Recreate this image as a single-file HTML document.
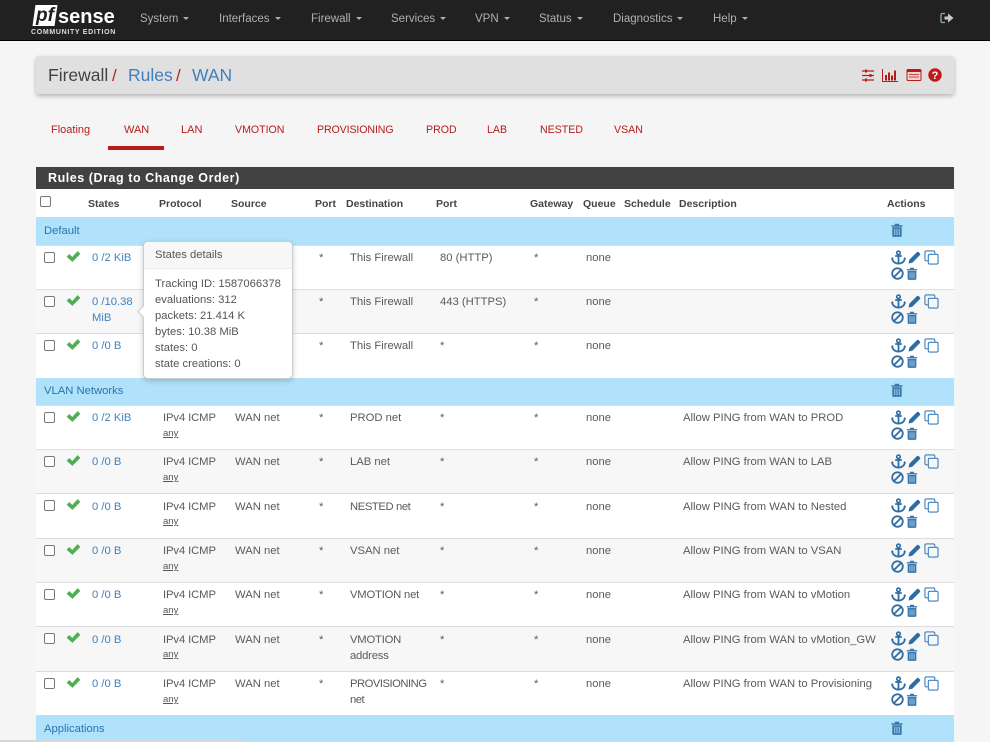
<!DOCTYPE html>
<html><head><meta charset="utf-8"><style>
html,body{margin:0;padding:0;width:990px;height:742px;overflow:hidden;background:#f5f5f5;font-family:"Liberation Sans",sans-serif;font-size:11.25px;color:#5a5a5a}
div,span,a,svg{position:absolute;white-space:nowrap}
.nav{left:0;top:0;width:990px;height:40px;background:#212121;border-bottom:1px solid #000}
.nav span{top:12px;color:#b0b0b0;font-size:11.5px;line-height:14px}
.nav span:after{content:"";display:inline-block;margin-left:5px;vertical-align:2px;border-top:3px solid #b0b0b0;border-left:3px solid transparent;border-right:3px solid transparent}
.nav span.n:after{display:none}
.crumb{left:36px;top:56px;width:918px;height:38px;background:#e0e0e0;border-radius:3px;box-shadow:0 2px 5px rgba(0,0,0,.28)}
.crumb span{top:9px;font-size:17.5px;line-height:21px;color:#424242}
.crumb .l{color:#3f7fbf}.crumb .s{color:#b71c1c;font-size:17px}
.tab{top:123px;color:#b71c1c;font-size:10.6px;line-height:14px}
.r{left:36px;width:918px;background:#fff;border-top:1px solid #ddd}
.g{background:#f7f7f7}
.b{left:36px;width:918px;background:#b0e3fb;color:#2874b0}
.b span{left:8px;top:6px;line-height:14px}
.h{top:8px;font-weight:bold;color:#444;font-size:10.5px;line-height:14px}
.r span{top:4px;line-height:16px}
.r.t5 span{top:5px}
.cb{left:8px;top:6px;width:9px;height:9px;border:1px solid #777;border-radius:2px;background:#fff}
.ck{left:30px;top:4px}
.ac{left:855px;top:4px}
.st{left:56px;color:#3f7fbf}
.a{left:127px;letter-spacing:-.1px}.c{left:199px}.d{left:283px}.e{left:314px;white-space:normal;width:85px}.f{left:404px}.j{left:498px}.k{left:550px}.m{left:647px}
.r span.any{left:127px;top:22px;font-size:9.5px;line-height:12px;text-decoration:underline;color:#555}
.pop{left:143px;top:241px;width:150px;height:138px;background:#fff;border:1px solid #ccc;border-radius:5px;box-shadow:0 2px 6px rgba(0,0,0,.2);box-sizing:border-box}
.pop .hd{left:0;top:0;width:148px;height:26px;background:#f7f7f7;border-bottom:1px solid #ebebeb;border-radius:5px 5px 0 0}
.pop span{left:11px;line-height:16px;color:#555}
</style></head><body>
<svg width="0" height="0" style="left:0;top:0"><defs>
<symbol id="chk" viewBox="0 0 14 12"><path d="M.6 6.200l2.500-2.500 2.800 2.800L10.800 1l2.600 2.600L6 11z" fill="#4caf50"/></symbol>
<symbol id="anc" viewBox="0 0 16 16"><circle cx="8" cy="3" r="1.900" fill="none" stroke="#2d6ca5" stroke-width="1.700"/><path d="M4.500 6.400h7M8 5v9.500M1.300 8.500C1.300 12.200 4.500 14.500 8 14.500s6.700-2.300 6.700-6" fill="none" stroke="#2d6ca5" stroke-width="1.900"/><path d="M0 9.500l1.300-2 1.500 2zM13.200 9.500l1.500-2 1.300 2z" fill="#2d6ca5"/></symbol>
<symbol id="pen" viewBox="0 0 14 14"><path d="M.6 13.400l.8-4L9.600 1.200c.5-.5 1.300-.5 1.800 0l1.400 1.400c.5.5.5 1.300 0 1.800L4.600 12.600z" fill="#2d6ca5"/></symbol>
<symbol id="cpy" viewBox="0 0 16 16"><path d="M4 11.500H2.500A1.500 1.500 0 0 1 1 10V2.500A1.500 1.500 0 0 1 2.500 1H10a1.500 1.500 0 0 1 1.500 1.500V4" fill="none" stroke="#3f7fbf" stroke-width="1.200"/><rect x="4.600" y="4.600" width="10.400" height="10.400" rx="1.500" fill="none" stroke="#3f7fbf" stroke-width="1.200"/></symbol>
<symbol id="ban" viewBox="0 0 14 14"><circle cx="7" cy="7" r="5.700" fill="none" stroke="#2d6ca5" stroke-width="1.900"/><path d="M3.100 10.900l7.800-7.800" stroke="#2d6ca5" stroke-width="1.900"/></symbol>
<symbol id="tr" viewBox="0 0 12 14"><path d="M.5 2.300h11V3.800H.5zM3.800 2.500V.8h4.400v1.700zM1.300 4.300h9.400v8.300c0 .8-.5 1.300-1.200 1.300h-7c-.7 0-1.200-.5-1.200-1.300z" fill="#3a77ad"/><path d="M3.800 5.800v6.500M6 5.800v6.500M8.200 5.800v6.500" stroke="#b0d4ee" stroke-width=".9"/></symbol>
<symbol id="act" viewBox="0 0 54 36"><use href="#anc" x="0" y="0" width="15" height="15"/><use href="#pen" x="17" y="1" width="13" height="13"/><use href="#cpy" x="33" y="0" width="15" height="15"/><use href="#ban" x="0" y="17" width="13" height="13"/><use href="#tr" x="15" y="17" width="12" height="13"/></symbol>
</defs></svg>

<div class="nav">
<div style="left:34px;top:5px;width:22px;height:21px;background:#fff;transform:skewX(-8deg)"></div>
<span class="n" style="left:36px;top:6px;color:#212121;font:italic bold 19px/19px 'Liberation Sans',sans-serif">pf</span>
<div style="left:58px;top:6px;color:#fff;font:bold 20px/23px 'Liberation Sans',sans-serif">sense</div>
<div style="left:31px;top:28px;color:#ddd;font:bold 7px/9px 'Liberation Sans',sans-serif;letter-spacing:.68px">COMMUNITY EDITION</div>
<span style="left:140px">System</span><span style="left:219px">Interfaces</span><span style="left:311px">Firewall</span><span style="left:391px">Services</span><span style="left:475px">VPN</span><span style="left:539px">Status</span><span style="left:613px">Diagnostics</span><span style="left:713px">Help</span>
<svg style="left:940px;top:12px" width="14" height="12" viewBox="0 0 14 12"><path d="M5 1.500H2.200C1.500 1.500 1 2 1 2.700v6.600c0 .7.500 1.200 1.200 1.200H5" fill="none" stroke="#8fa9bd" stroke-width="1.300"/><path d="M4.500 4.500H8V1.500L13.500 6 8 10.500v-3H4.500z" fill="#c8c8c8"/></svg>
</div>

<div class="crumb">
<span style="left:12px">Firewall</span><span class="s" style="left:76px">/</span><span class="l" style="left:92px">Rules</span><span class="s" style="left:140px">/</span><span class="l" style="left:156px">WAN</span>
<svg style="left:825px;top:12px" width="90" height="15" viewBox="0 0 90 15">
<path d="M1 3h12M1 7.500h12M1 12h12" stroke="#b71c1c" stroke-width="1.200"/><path d="M4 1.500h2v3H4zM8.500 6h2v3h-2zM4 10.500h2v3H4z" fill="#b71c1c"/>
<path d="M21.500 1v12.500H37" fill="none" stroke="#b71c1c" stroke-width="1"/><path d="M24 7h2v5.500h-2zM27 4.500h2v8h-2zM30 7.500h2v5h-2zM33 2.500h2v10h-2z" fill="#b71c1c"/>
<rect x="46" y="1.500" width="14" height="11" rx="1" fill="#f0d0d0" stroke="#b71c1c" stroke-width="1"/><path d="M46 1.500h14v2.500H46z" fill="#b71c1c"/><path d="M48 6.500h10M48 9h10" stroke="#b71c1c" stroke-width=".8"/>
<circle cx="74" cy="7" r="6.700" fill="#c01818"/><text x="74" y="11" text-anchor="middle" fill="#fff" font-size="11" font-weight="bold" font-family="Liberation Sans">?</text></svg>
</div>

<span class="tab" style="left:51px;font-size:11px">Floating</span><span class="tab" style="left:124px;font-size:11px">WAN</span><span class="tab" style="left:181px;font-size:11px">LAN</span><span class="tab" style="left:235px">VMOTION</span><span class="tab" style="left:317px;letter-spacing:-.1px">PROVISIONING</span><span class="tab" style="left:426px">PROD</span><span class="tab" style="left:487px">LAB</span><span class="tab" style="left:540px">NESTED</span><span class="tab" style="left:614px">VSAN</span>
<div style="left:108px;top:146px;width:56px;height:4px;background:#b71c1c"></div>

<div style="left:36px;top:167px;width:918px;height:22px;background:#424242;color:#fff;font:bold 12.500px/22px 'Liberation Sans',sans-serif;letter-spacing:.55px"><span style="left:12px">Rules (Drag to Change Order)</span></div>

<div style="left:36px;top:189px;width:918px;height:28px;background:#fff">
<div class="cb" style="left:4px;top:7px"></div>
<span class="h" style="left:52px">States</span><span class="h" style="left:123px">Protocol</span><span class="h" style="left:195px">Source</span><span class="h" style="left:279px">Port</span><span class="h" style="left:310px">Destination</span><span class="h" style="left:400px">Port</span><span class="h" style="left:494px">Gateway</span><span class="h" style="left:547px">Queue</span><span class="h" style="left:588px">Schedule</span><span class="h" style="left:643px">Description</span><span class="h" style="left:851px">Actions</span>
</div>

<div class="b" style="top:217px;height:28px"><span style="top:7px">Default</span><svg style="left:855px;top:6px" width="12" height="14"><use href="#tr"/></svg></div>

<div class="r" style="top:245px;height:43px"><div class="cb"></div><svg class="ck" width="15" height="13"><use href="#chk"/></svg><span class="st">0 /2 KiB</span><span class="d">*</span><span class="e">This Firewall</span><span class="f">80 (HTTP)</span><span class="j">*</span><span class="k">none</span><svg class="ac" width="54" height="36"><use href="#act"/></svg></div>
<div class="r g" style="top:289px;height:43px"><div class="cb"></div><svg class="ck" width="15" height="13"><use href="#chk"/></svg><span class="st" style="white-space:normal;width:46px">0 /10.38 MiB</span><span class="d">*</span><span class="e">This Firewall</span><span class="f">443 (HTTPS)</span><span class="j">*</span><span class="k">none</span><svg class="ac" width="54" height="36"><use href="#act"/></svg></div>
<div class="r" style="top:333px;height:44px"><div class="cb"></div><svg class="ck" width="15" height="13"><use href="#chk"/></svg><span class="st">0 /0 B</span><span class="d">*</span><span class="e">This Firewall</span><span class="f">*</span><span class="j">*</span><span class="k">none</span><svg class="ac" width="54" height="36"><use href="#act"/></svg></div>

<div class="b" style="top:378px;height:27px"><span>VLAN Networks</span><svg style="left:855px;top:5px" width="12" height="14"><use href="#tr"/></svg></div>

<div class="r" style="top:405px;height:43px"><div class="cb"></div><svg class="ck" width="15" height="13"><use href="#chk"/></svg><span class="st">0 /2 KiB</span><span class="a">IPv4 ICMP</span><span class="any">any</span><span class="c">WAN net</span><span class="d">*</span><span class="e">PROD net</span><span class="f">*</span><span class="j">*</span><span class="k">none</span><span class="m">Allow PING from WAN to PROD</span><svg class="ac" width="54" height="36"><use href="#act"/></svg></div>
<div class="r g" style="top:449px;height:43px"><div class="cb"></div><svg class="ck" width="15" height="13"><use href="#chk"/></svg><span class="st">0 /0 B</span><span class="a">IPv4 ICMP</span><span class="any">any</span><span class="c">WAN net</span><span class="d">*</span><span class="e">LAB net</span><span class="f">*</span><span class="j">*</span><span class="k">none</span><span class="m">Allow PING from WAN to LAB</span><svg class="ac" width="54" height="36"><use href="#act"/></svg></div>
<div class="r t5" style="top:493px;height:44px"><div class="cb"></div><svg class="ck" width="15" height="13"><use href="#chk"/></svg><span class="st">0 /0 B</span><span class="a">IPv4 ICMP</span><span class="any">any</span><span class="c">WAN net</span><span class="d">*</span><span class="e" style="letter-spacing:-.4px">NESTED net</span><span class="f">*</span><span class="j">*</span><span class="k">none</span><span class="m">Allow PING from WAN to Nested</span><svg class="ac" width="54" height="36"><use href="#act"/></svg></div>
<div class="r g" style="top:538px;height:43px"><div class="cb"></div><svg class="ck" width="15" height="13"><use href="#chk"/></svg><span class="st">0 /0 B</span><span class="a">IPv4 ICMP</span><span class="any">any</span><span class="c">WAN net</span><span class="d">*</span><span class="e">VSAN net</span><span class="f">*</span><span class="j">*</span><span class="k">none</span><span class="m">Allow PING from WAN to VSAN</span><svg class="ac" width="54" height="36"><use href="#act"/></svg></div>
<div class="r" style="top:582px;height:43px"><div class="cb"></div><svg class="ck" width="15" height="13"><use href="#chk"/></svg><span class="st">0 /0 B</span><span class="a">IPv4 ICMP</span><span class="any">any</span><span class="c">WAN net</span><span class="d">*</span><span class="e" style="letter-spacing:-.2px">VMOTION net</span><span class="f">*</span><span class="j">*</span><span class="k">none</span><span class="m">Allow PING from WAN to vMotion</span><svg class="ac" width="54" height="36"><use href="#act"/></svg></div>
<div class="r g t5" style="top:626px;height:44px"><div class="cb"></div><svg class="ck" width="15" height="13"><use href="#chk"/></svg><span class="st">0 /0 B</span><span class="a">IPv4 ICMP</span><span class="any">any</span><span class="c">WAN net</span><span class="d">*</span><span class="e" style="letter-spacing:-.2px">VMOTION address</span><span class="f">*</span><span class="j">*</span><span class="k">none</span><span class="m">Allow PING from WAN to vMotion_GW</span><svg class="ac" width="54" height="36"><use href="#act"/></svg></div>
<div class="r" style="top:671px;height:43px"><div class="cb"></div><svg class="ck" width="15" height="13"><use href="#chk"/></svg><span class="st">0 /0 B</span><span class="a">IPv4 ICMP</span><span class="any">any</span><span class="c">WAN net</span><span class="d">*</span><span class="e" style="letter-spacing:-.5px">PROVISIONING net</span><span class="f">*</span><span class="j">*</span><span class="k">none</span><span class="m">Allow PING from WAN to Provisioning</span><svg class="ac" width="54" height="36"><use href="#act"/></svg></div>

<div class="b" style="top:715px;height:27px"><span style="top:7px">Applications</span><svg style="left:855px;top:6px" width="12" height="14"><use href="#tr"/></svg></div>
<div style="left:0;top:740px;width:243px;height:2px;background:#d8d8d8"></div>

<div class="pop">
<div class="hd"></div>
<div style="left:-5px;top:65px;width:8px;height:8px;background:#fff;border-left:1px solid #ccc;border-bottom:1px solid #ccc;transform:rotate(45deg)"></div>
<span style="top:5px">States details</span>
<span style="top:34px">Tracking ID: 1587066378</span>
<span style="top:50px">evaluations: 312</span>
<span style="top:66px">packets: 21.414 K</span>
<span style="top:82px">bytes: 10.38 MiB</span>
<span style="top:98px">states: 0</span>
<span style="top:114px">state creations: 0</span>
</div>
</body></html>
